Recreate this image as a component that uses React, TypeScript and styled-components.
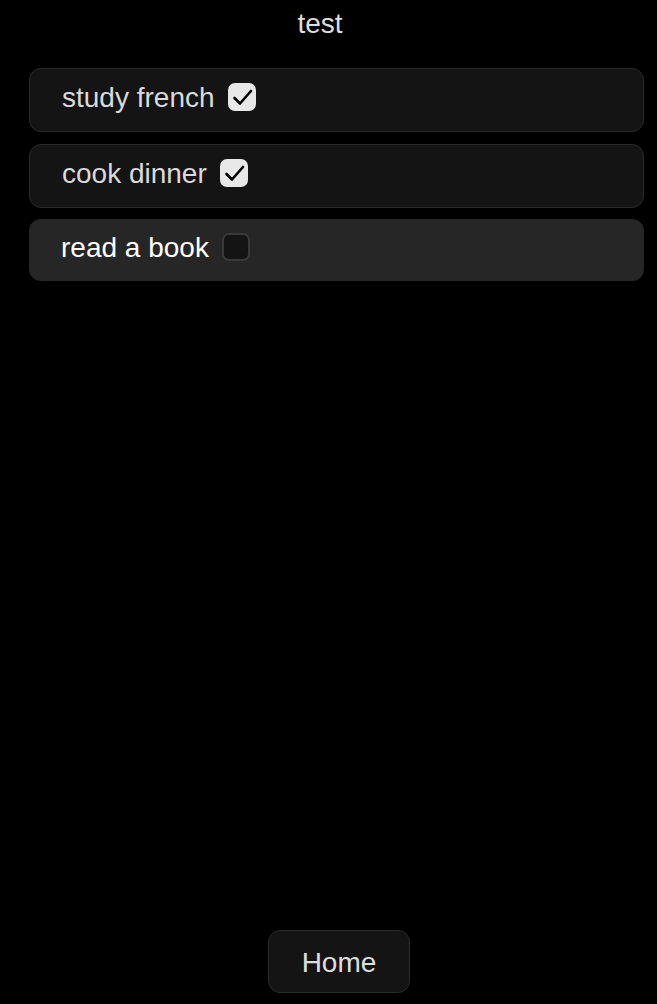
import React, { useState } from "react";
import styled, { createGlobalStyle } from "styled-components";

const GlobalStyle = createGlobalStyle`
  html, body {
    margin: 0;
    padding: 0;
    background: #000;
  }
  body {
    font-family: "Liberation Sans", Arial, Helvetica, sans-serif;
  }
  * { box-sizing: border-box; }
`;

const Page = styled.div`
  min-height: 100vh;
  display: flex;
  flex-direction: column;
  padding: 8px 0 11px;
  background: #000;
  color: #dedede;
  font-size: 28px;
  line-height: 32px;
`;

const Title = styled.h1`
  margin: 0;
  padding-right: 17px;
  text-align: center;
  font-size: 28px;
  font-weight: 400;
  line-height: 32px;
  color: #dedede;
`;

const List = styled.ul`
  list-style: none;
  margin: 28px 13px 0 29px;
  padding: 0;
  display: flex;
  flex-direction: column;
  gap: 12px;
`;

const Row = styled.li<{ $hover?: boolean }>`
  display: flex;
  align-items: center;
  gap: 13px;
  padding: 13px 32px 17px;
  border-radius: 12px;
  background: ${(p) => (p.$hover ? "#262626" : "#141414")};
  border: ${(p) => (p.$hover ? "none" : "1px solid #2a2a2a")};
  color: ${(p) => (p.$hover ? "#ffffff" : "#dadada")};
  margin-top: ${(p) => (p.$hover ? "-1px" : "0")};
  cursor: pointer;
`;

const Label = styled.span`
  font-size: 28px;
  line-height: 32px;
`;

const Box = styled.span<{ $checked: boolean }>`
  width: 28px;
  height: 28px;
  border-radius: 7px;
  display: inline-flex;
  align-items: center;
  justify-content: center;
  flex-shrink: 0;
  margin-top: -2px;
  background: ${(p) => (p.$checked ? "#e8e8e8" : "#141414")};
  border: ${(p) => (p.$checked ? "none" : "2px solid #3a3a3a")};
`;

const Footer = styled.div`
  margin-top: auto;
  display: flex;
  justify-content: center;
  padding-left: 21px;
`;

const HomeButton = styled.button`
  font-family: "Liberation Sans", Arial, Helvetica, sans-serif;
  font-size: 28px;
  line-height: 32px;
  color: #dedede;
  background: #141414;
  border: 1px solid #2a2a2a;
  border-radius: 12px;
  padding: 16px 33px 13px;
  cursor: pointer;
`;

const Check = () => (
  <svg width="28" height="28" viewBox="0 0 28 28" fill="none">
    <path
      d="M6.5 15 L12 20.5 L23 8"
      stroke="#000"
      strokeWidth="2.6"
      strokeLinecap="round"
      strokeLinejoin="round"
    />
  </svg>
);

type Todo = { text: string; done: boolean };

export default function App() {
  const [todos, setTodos] = useState<Todo[]>([
    { text: "study french", done: true },
    { text: "cook dinner", done: true },
    { text: "read a book", done: false },
  ]);

  const toggle = (i: number) =>
    setTodos((t) => t.map((x, j) => (j === i ? { ...x, done: !x.done } : x)));

  return (
    <>
      <GlobalStyle />
      <Page>
        <Title>test</Title>
        <List>
          {todos.map((t, i) => (
            <Row key={t.text} $hover={i === 2} onClick={() => toggle(i)}>
              <Label>{t.text}</Label>
              <Box $checked={t.done}>{t.done && <Check />}</Box>
            </Row>
          ))}
        </List>
        <Footer>
          <HomeButton>Home</HomeButton>
        </Footer>
      </Page>
    </>
  );
}
